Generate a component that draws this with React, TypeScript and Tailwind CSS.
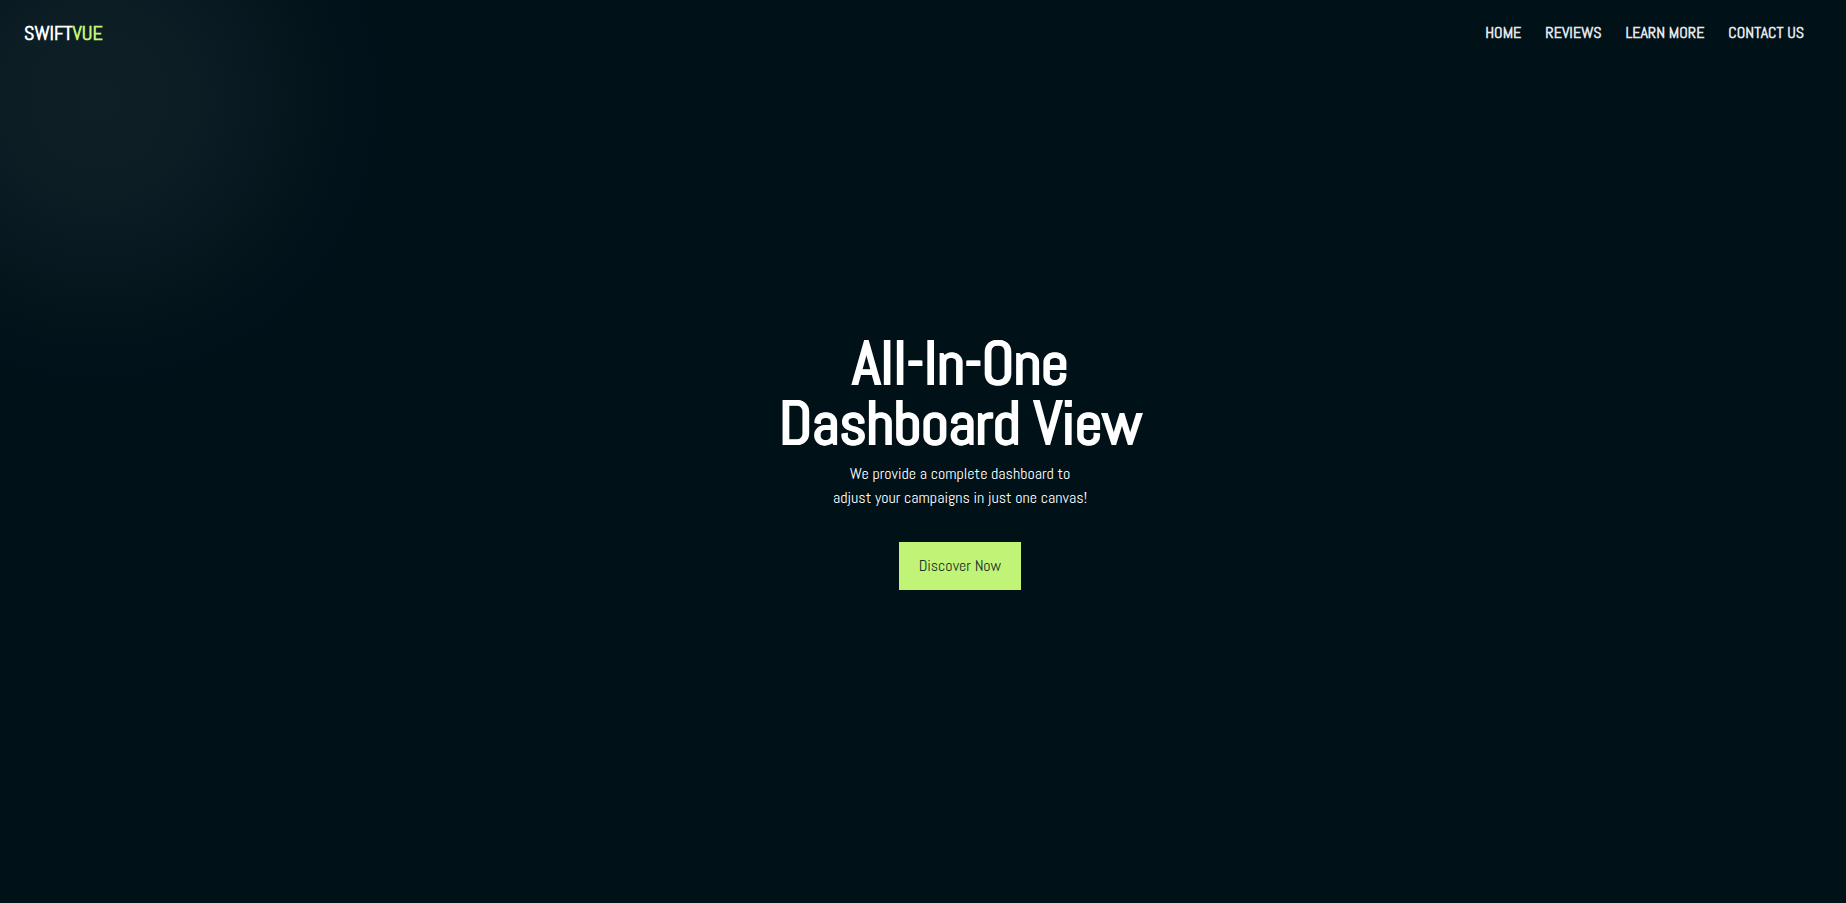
const links = ["Home", "Reviews", "Learn More", "Contact Us"];

export default function App() {
  return (
    <div className="relative flex min-h-screen flex-col overflow-hidden bg-[#001118] font-['Abel','Roboto_Condensed',sans-serif] text-white">
      <div
        aria-hidden="true"
        className="pointer-events-none absolute -top-[205px] -left-[207px] size-[610px] rounded-full bg-[radial-gradient(circle_closest-side,#0e1f26_0%,#0c1d24_31%,#0a1a22_44%,#07171e_59%,#04141b_72%,#02121a_84%,#001118_98%)]"
      />
      <header className="relative flex h-[66px] items-center justify-between pr-[42px] pl-6">
        <a href="#home" className="text-xl font-bold">
          SWIFT<span className="text-[#c1f376]">VUE</span>
        </a>
        <nav aria-label="Main">
          <ul className="flex gap-6 text-base font-bold text-gray-200 uppercase">
            {links.map((link) => (
              <li key={link}>
                <a href="#home">{link}</a>
              </li>
            ))}
          </ul>
        </nav>
      </header>
      <main className="relative flex flex-1 flex-col items-center pt-[268px] pl-[74px] text-center">
        <h1 className="text-6xl leading-[60px] font-bold [text-shadow:1px_0_0_#fff]">
          All-In-One
          <br />
          Dashboard View
        </h1>
        <p className="mt-2 text-base leading-6">
          We provide a complete dashboard to
          <br />
          adjust your campaigns in just one canvas!
        </p>
        <button type="button" className="mt-8 h-12 bg-[#c1f376] px-5 text-base text-[#1a3328]">
          Discover Now
        </button>
      </main>
    </div>
  );
}
